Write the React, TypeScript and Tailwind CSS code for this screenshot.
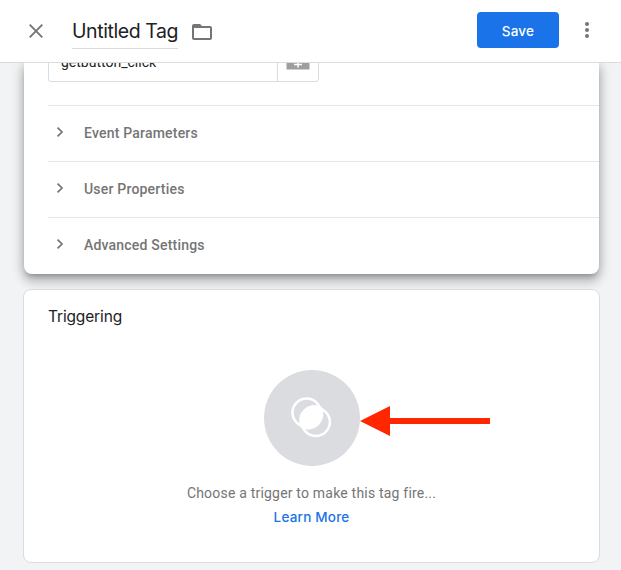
const sections = ["Event Parameters", "User Properties", "Advanced Settings"];

function Header() {
  return (
    <header className="relative z-10 flex h-[63px] shrink-0 items-start border-b border-[#dadce0] bg-white pl-[29px] pr-8">
      <button className="mt-6 h-[14px] w-[14px]" aria-label="Close">
        <svg className="block" width="14" height="14" viewBox="0 0 14 14" stroke="#757575" strokeWidth="1.9">
          <path d="M0.7 0.7L13.3 13.3M13.3 0.7L0.7 13.3" />
        </svg>
      </button>
      <h1 className="ml-[29px] mt-[18px] h-[31px] w-[106px] whitespace-nowrap border-b border-[#dadce0] font-['Inter',sans-serif] text-[19.5px] leading-[27px] tracking-[-0.42px] text-[#202124]">
        Untitled Tag
      </h1>
      <svg className="ml-[14px] mt-6 block" width="20" height="16" viewBox="0 0 20 16">
        <path
          fill="#757575"
          fillRule="evenodd"
          d="M2 0h6l2 2h8a2 2 0 0 1 2 2v10a2 2 0 0 1-2 2H2a2 2 0 0 1-2-2V2a2 2 0 0 1 2-2zM2 4v10h16V4z"
        />
      </svg>
      <button className="ml-auto mt-3 h-9 w-[82px] rounded bg-[#1a73e8] pt-px font-['Inter',sans-serif] text-[13.5px] font-medium leading-9 tracking-[0.2px] text-white">
        Save
      </button>
      <button className="ml-[26px] mt-[22px]" aria-label="More">
        <svg className="block" width="4" height="16" viewBox="0 0 4 16" fill="#757575">
          <circle cx="2" cy="2" r="2" />
          <circle cx="2" cy="8" r="2" />
          <circle cx="2" cy="14" r="2" />
        </svg>
      </button>
    </header>
  );
}

function EventNameField() {
  return (
    <div className="-mt-[18px] ml-6 flex h-[37px] w-[271px] rounded-[3px] border border-[#dadce0]">
      <div className="w-[229px] border-r border-[#dadce0] pl-3 pt-1.5 font-['Roboto',sans-serif] text-[14px] leading-5 tracking-[0px] text-[#202124]">
        getbutton_click
      </div>
      <div className="flex-1 pl-2 pt-1">
        <svg className="block" width="24" height="20" viewBox="0 0 24 20">
          <rect x="0.5" width="23" height="19.5" fill="#9e9e9e" />
          <path d="M8 14.5h8M12 10.5v7" stroke="#fff" strokeWidth="1.5" />
        </svg>
      </div>
    </div>
  );
}

function SettingRow({ label }: { label: string }) {
  return (
    <div className="ml-6 flex h-14 items-center border-t border-[#e4e5e7] pl-2">
      <svg className="-mt-[3px] block" width="8" height="10" viewBox="0 0 8 10" fill="none" stroke="#757575" strokeWidth="1.7">
        <path d="M1.5 0.6L6 5L1.5 9.4" />
      </svg>
      <span className="-mt-0.5 ml-5 font-['Roboto',sans-serif] text-[14px] font-medium leading-5 tracking-[0.2px] text-[#757575]">
        {label}
      </span>
    </div>
  );
}

function TriggerIcon() {
  return (
    <div className="relative h-24 w-24 rounded-full bg-[#dadce0]">
      <svg className="block" width="96" height="96" viewBox="0 0 96 96" fill="none" stroke="#fff" strokeWidth="2.5">
        <circle cx="42.6" cy="42.6" r="14.1" />
        <circle cx="51.8" cy="52" r="14.1" />
        <path d="M56.6 37.8A14.1 14.1 0 0 1 37.8 56.8A14.1 14.1 0 0 1 56.6 37.8z" fill="#fff" />
      </svg>
      {/* arrow pointing at the trigger */}
      <svg className="absolute left-24 top-9" width="131" height="30" viewBox="0 0 131 30" fill="#ff2600">
        <path d="M0 15L30 0V12H130V18H30V30z" />
      </svg>
    </div>
  );
}

export default function App() {
  return (
    <div className="flex h-[570px] w-[621px] flex-col overflow-hidden bg-[#f1f3f4]">
      <Header />
      <main className="flex flex-1 flex-col pl-[23px] pr-[21px]">
        <section className="ml-px mr-px h-[211px] rounded-b-lg bg-white shadow-[0_5px_5px_-3px_rgba(0,0,0,0.2),0_8px_10px_1px_rgba(0,0,0,0.14),0_3px_14px_2px_rgba(0,0,0,0.12),0_0_8px_rgba(0,0,0,0.1)]">
          <EventNameField />
          <div className="mt-[23px]">
            {sections.map((label) => (
              <SettingRow key={label} label={label} />
            ))}
          </div>
        </section>
        <section className="relative mt-[15px] flex h-[274px] flex-col items-center rounded-lg border border-[#dadce0] bg-white">
          <h2 className="mt-4 self-start pl-6 font-['Inter',sans-serif] text-[15.5px] leading-[22px] tracking-[-0.15px] text-[#202124]">
            Triggering
          </h2>
          <div className="mt-[42px]">
            <TriggerIcon />
          </div>
          <p className="mt-[17px] font-['Roboto',sans-serif] text-[14px] leading-5 tracking-[0.2px] text-[#757575]">
            Choose a trigger to make this tag fire...
          </p>
          <a className="mt-1 font-['Inter',sans-serif] text-[13.5px] font-medium leading-5 tracking-[0.2px] text-[#1a73e8]">Learn More</a>
        </section>
      </main>
    </div>
  );
}
